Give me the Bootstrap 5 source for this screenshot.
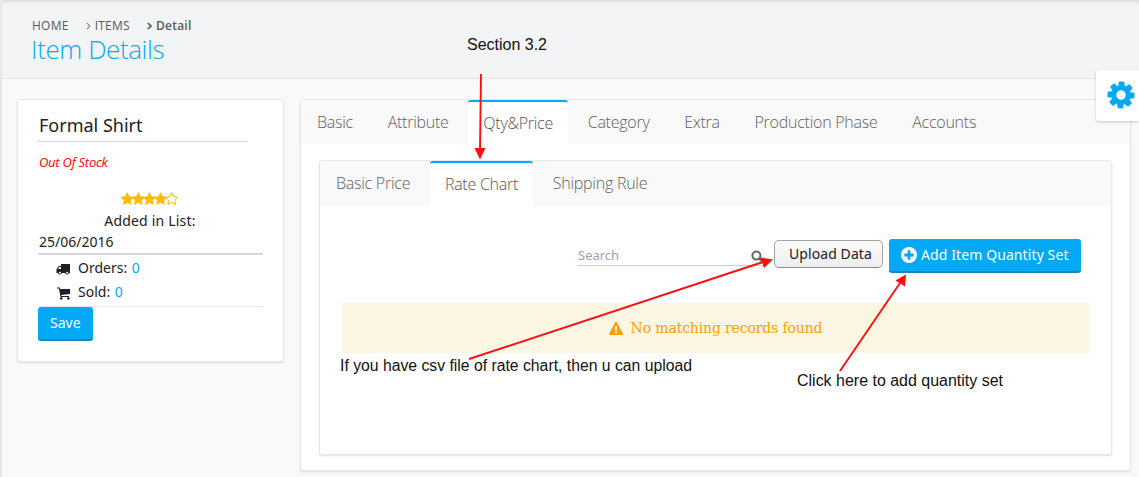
<!DOCTYPE html>
<html lang="en">
<head>
<meta charset="utf-8">
<meta name="viewport" content="width=device-width, initial-scale=1">
<title>Item Details</title>
<link href="https://cdn.jsdelivr.net/npm/bootstrap@5.3.0/dist/css/bootstrap.min.css" rel="stylesheet">
<style>
  body { font-family: "Noto Sans", sans-serif; font-size: 14px; line-height: 20px; color: #212121; background: #f9f9f9; height: 477px; overflow: hidden; border-left: 2px solid #e5e9ec; }
  .page-head { height: 79px; background: #f3f4f6; border-bottom: 1px solid #dee5e7; padding: 17px 0 0 30px; box-shadow: inset 0 3px 3px -1px #dcdddf; font-family: "Open Sans", sans-serif; }
  .crumbs { font-size: 12px; line-height: 18px; color: #58595b; letter-spacing: .25px; }
  .crumbs svg { width: 5px; height: 8px; margin: 0 4px 0 17px; }
  .page-title { font-size: 26px; line-height: 28px; font-weight: 300; color: #03a9f4; margin: 0 0 0 -1px; letter-spacing: -.42px; }
  .content { padding: 20px 0 0 15px; gap: 16px; }
  .panel-box { background: #fff; border-radius: 3px; border: 1px solid #e7e8ea; box-shadow: 0 1px 2px rgba(0,0,0,.12); }
  .side { width: 267px; height: 263px; padding: 13px 20px 0; }
  .side h2 { font-size: 18px; line-height: 24px; width: 210px; height: 29px; border-bottom: 1px solid #d6d6d6; padding-left: 1px; margin: 0; font-weight: 400; }
  .stock { font: italic 13px/20px "Open Sans", sans-serif; color: #f00; padding-left: 1px; margin-top: 10px; letter-spacing: -.25px; }
  .stars { height: 14px; margin-top: 20px; }
  .added { border-bottom: 2px solid #d8d8d8; height: 49px; line-height: 21px; padding: 4px 0 0 1px; }
  .added-label { letter-spacing: .2px; padding-right: 2px; }
  .stats { border-bottom: 1px solid #e7e7e7; height: 52px; padding-top: 1px; }
  .stat { line-height: 24px; padding-left: 18px; }
  .stat svg { width: 15px; height: 14px; margin: 1px 7px 0 0; }
  .stat b { font-weight: 400; color: #03a9f4; margin-left: 1px; }
  .btn-blue { background: #03a9f4; color: #fff; border: 0; border-bottom: 2px solid #1d82bd; border-radius: 3px; font-size: 14px; line-height: 20px; height: 34px; padding: 0 12px; }
  .add-set { width: 192px; letter-spacing: .1px; white-space: nowrap; }
  .main { width: 831px; height: 372px; }
  .tabbar { background: #f9f9f9; border: 0; font: 300 16px/24px "Open Sans", sans-serif; letter-spacing: -.25px; gap: 4.7px; border-radius: 3px 3px 0 0; padding-left: 1px; }
  .tabbar .nav-link { height: 100%; color: #616161; border: 0; border-top: 2px solid transparent; border-radius: 3px 3px 0 0; padding: 8px 15px 0; margin: 0; }
  .tabbar .nav-link.active { color: #555; background: #fff; border-top-color: #03a9f4; padding-top: 9px; }
  .outer-tabs { height: 44px; }
  .inner-tabs { height: 45px; }
  .sub { width: 793px; height: 295px; margin: 16px 0 0 18px; }
  .tools { padding: 33px 30px 0 0; }
  .search { width: 190px; height: 27px; border-bottom: 1px solid #d0d0d0; color: #a2a2a2; font-size: 13px; padding: 6px 2px 0 1px; margin-right: 7px; }
  .upload { height: 28px; width: 109px; margin: 1px 6px 0 0; border: 1px solid #a5a5a5; border-bottom-color: #8c8c8c; border-radius: 5px; background: linear-gradient(#fbfbfb, #eee); line-height: 26px; padding: 0 0 0 14px; color: #212121; font-size: 14px; text-align: left; letter-spacing: .08px; }
  .notice { height: 50px; margin: 30px 22px 0; background: #fdf6e3; color: #ffa000; font: 14px/50px "DejaVu Serif", serif; letter-spacing: -.14px; }
  .gear { right: 0; top: 70px; width: 43px; height: 51px; background: #fff; border-radius: 3px 0 0 3px; box-shadow: 0 1px 3px rgba(0,0,0,.2); padding: 11px 0 0 11px; }
  .notes { left: 0; top: 0; pointer-events: none; }
  .notes text { font: 16px "Liberation Sans", sans-serif; fill: #111; }
</style>
</head>
<body class="position-relative">
<header class="page-head">
  <div class="crumbs d-flex align-items-center">
    <span>HOME</span>
    <svg viewBox="0 0 5 8" fill="none" stroke="#58595b"><path d="M.8 1l3.2 3-3.2 3"/></svg>
    <span>ITEMS</span>
    <svg viewBox="0 0 5 8" fill="none" stroke="#58595b" stroke-width="1.6"><path d="M.8 1l3.2 3-3.2 3"/></svg>
    <span class="fw-semibold">Detail</span>
  </div>
  <h1 class="page-title">Item Details</h1>
</header>

<main class="content d-flex align-items-start">
  <aside class="panel-box side flex-shrink-0">
    <h2>Formal Shirt</h2>
    <div class="stock">Out Of Stock</div>
    <div class="stars"><svg class="d-block mx-auto" width="59" height="14" viewBox="0 0 59 14">
      <defs><path id="star" d="M6.3.6l1.900 4 4.300.6-3.100 3 .7 4.300-3.800-2-3.900 2 .7-4.300-3.100-3 4.300-.6z"/></defs>
      <g fill="#fb0" stroke="#fb0" stroke-width=".6"><use href="#star"/><use href="#star" x="11.100"/><use href="#star" x="22.200"/><use href="#star" x="33.300"/><use href="#star" x="44.400" fill="none" stroke-width="1"/></g></svg></div>
    <div class="added"><div class="added-label text-center">Added in List:</div><div>25/06/2016</div></div>
    <div class="stats">
      <div class="stat d-flex align-items-center"><svg viewBox="0 0 15 14"><path fill="#212121" fill-rule="evenodd" d="M5 2h9v9h-.8a2 2 0 0 1-3.9 0H5.8a2 2 0 0 1-3.9 0H.5V7.2L2.8 4H5zM2 7h3V5H3.3zM3.9 9.7a1 1 0 1 0 0 2 1 1 0 0 0 0-2zm7.4 0a1 1 0 1 0 0 2 1 1 0 0 0 0-2z"/></svg><span>Orders: <b>0</b></span></div>
      <div class="stat d-flex align-items-center"><svg viewBox="0 0 15 14"><path fill="#212121" d="M1 1.6h2.8l.3 1.3h10v5L5.3 9l.2.9H13v1H4.5L2.9 2.6H1z"/><circle cx="5.3" cy="12.4" r="1.2"/><circle cx="12.4" cy="12.4" r="1.2"/></svg><span>Sold: <b>0</b></span></div>
    </div>
    <button class="btn btn-blue d-block">Save</button>
  </aside>

  <section class="panel-box main flex-shrink-0">
    <nav class="nav tabbar outer-tabs">
      <a class="nav-link">Basic</a><a class="nav-link">Attribute</a><a class="nav-link active">Qty&amp;Price</a><a class="nav-link">Category</a><a class="nav-link">Extra</a><a class="nav-link">Production Phase</a><a class="nav-link">Accounts</a>
    </nav>
    <div class="panel-box sub">
      <nav class="nav tabbar inner-tabs">
        <a class="nav-link">Basic Price</a><a class="nav-link active">Rate Chart</a><a class="nav-link">Shipping Rule</a>
      </nav>
      <div class="tools d-flex justify-content-end align-items-start">
        <div class="search d-flex justify-content-between"><span>Search</span><svg class="mt-1" width="14" height="14" viewBox="0 0 14 14" fill="none" stroke="#666" stroke-width="2"><circle cx="5.4" cy="6.6" r="4"/><path d="M8.5 9.7l3.3 3.3" stroke-width="2.4"/></svg></div>
        <button class="upload">Upload Data</button>
        <button class="btn btn-blue add-set d-flex align-items-center"><svg class="me-1 flex-shrink-0" width="16" height="16" viewBox="0 0 16 16"><circle cx="8" cy="8" r="8" fill="#fff"/><path d="M8 3.3v9.4M3.3 8h9.4" stroke="#03a9f4" stroke-width="2.8"/></svg>Add Item Quantity Set</button>
      </div>
      <div class="notice d-flex justify-content-center align-items-center"><svg class="me-2" width="14" height="13" viewBox="0 0 14 13"><path fill="#ffa000" d="M7 0q.6 0 .9.6l6 11q.3 1.4-.9 1.4H1q-1.200 0-.9-1.400l6-11Q6.400 0 7 0z"/><path d="M7 4v4.500M7 9.500v2" stroke="#fdf6e3" stroke-width="2"/></svg>No matching records found</div>
    </div>
  </section>
</main>

<div class="gear position-absolute"><svg class="d-block" width="28" height="28" viewBox="-14 -14 28 28"><g transform="rotate(3)" fill="#03a9f4"><path fill-rule="evenodd" d="M0-9.800A9.800 9.800 0 1 0 0 9.800 9.800 9.800 0 1 0 0-9.800zM0-4.700A4.700 4.700 0 1 1 0 4.700 4.700 4.700 0 1 1 0-4.700z"/><g id="teeth"><path id="tooth" d="M-3.300-9l.7-4.500h5.200l.7 4.500z"/><use href="#tooth" transform="rotate(45)"/><use href="#tooth" transform="rotate(90)"/><use href="#tooth" transform="rotate(135)"/></g><use href="#teeth" transform="rotate(180)"/></g></svg></div>

<!-- Callouts pointing at the controls -->
<svg class="notes position-absolute" width="1137" height="477" viewBox="2 0 1137 477">
  <g stroke="#fb0f0f" stroke-width="1.900" fill="none"><path d="M481 74L480 150M469 359L763 262M840 371L900 283"/></g>
  <g fill="#fb0f0f"><path d="M474.500 148h11L480 159.500zM760.500 257.500L773 259.500 764 268zM895.500 280.500L906 274.500 905 286.500z"/></g>
  <text x="467" y="50" textLength="80" lengthAdjust="spacingAndGlyphs">Section 3.2</text>
  <text x="340" y="371" textLength="352" lengthAdjust="spacingAndGlyphs">If you have csv file of rate chart, then u can upload</text>
  <text x="797" y="386" textLength="206" lengthAdjust="spacingAndGlyphs">Click here to add quantity set</text>
</svg>
<script src="https://cdn.jsdelivr.net/npm/bootstrap@5.3.0/dist/js/bootstrap.bundle.min.js"></script>
</body>
</html>
